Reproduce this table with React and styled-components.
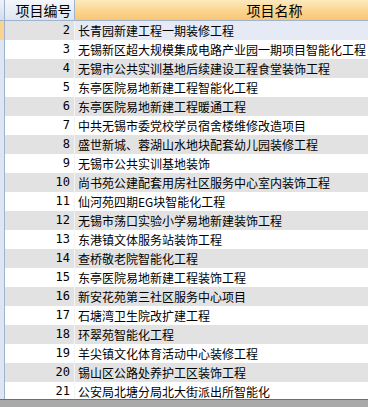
import React from 'react'
import styled, { createGlobalStyle } from 'styled-components'

const GlobalStyle = createGlobalStyle`
  html, body {
    margin: 0;
    padding: 0;
    background: #ffffff;
  }
`

const rows = [
  [2, '长青园新建工程一期装修工程'],
  [3, '无锡新区超大规模集成电路产业园一期项目智能化工程'],
  [4, '无锡市公共实训基地后续建设工程食堂装饰工程'],
  [5, '东亭医院易地新建工程智能化工程'],
  [6, '东亭医院易地新建工程暖通工程'],
  [7, '中共无锡市委党校学员宿舍楼维修改造项目'],
  [8, '盛世新城、蓉湖山水地块配套幼儿园装修工程'],
  [9, '无锡市公共实训基地装饰'],
  [10, '尚书苑公建配套用房社区服务中心室内装饰工程'],
  [11, '仙河苑四期EG块智能化工程'],
  [12, '无锡市荡口实验小学易地新建装饰工程'],
  [13, '东港镇文体服务站装饰工程'],
  [14, '查桥敬老院智能化工程'],
  [15, '东亭医院易地新建工程装饰工程'],
  [16, '新安花苑第三社区服务中心项目'],
  [17, '石塘湾卫生院改扩建工程'],
  [18, '环翠苑智能化工程'],
  [19, '羊尖镇文化体育活动中心装修工程'],
  [20, '锡山区公路处养护工区装饰工程'],
  [21, '公安局北塘分局北大街派出所智能化'],
]

const Grid = styled.div`
  width: 368px;
  height: 407px;
  display: flex;
  flex-direction: column;
  overflow: hidden;
  font-family: "Noto Sans CJK SC", "DejaVu Sans", sans-serif;
  color: #000;
`

const Columns = `
  display: grid;
  grid-template-columns: 5px 70px 400px;
`

const HeaderRow = styled.div`
  ${Columns}
  height: 20px;
  border-bottom: 1px solid #9fb4cc;
  flex: none;
`

const Corner = styled.div`
  background: linear-gradient(#eef3fa, #d3deec);
  border-right: 1px solid #9fb4cc;
`

const HeadCell = styled.div`
  display: flex;
  align-items: center;
  justify-content: center;
  font-size: 14px;
  line-height: 20px;
  padding-left: ${p => p.$pad}px;
  background: ${p => p.$active
    ? 'linear-gradient(#fde9bd, #fbd58e 55%, #f9c574)'
    : 'linear-gradient(#f4f7fb, #dde6f1)'};
  border-right: 1px solid ${p => p.$active ? '#f2c583' : '#9fb4cc'};
`

const Body = styled.div`
  flex: 1;
  overflow: hidden;
`

const Row = styled.div`
  ${Columns}
  height: 19px;
  background: ${p => p.$alt ? '#e2e2e2' : '#ffffff'};
`

const Indicator = styled.div`
  background: ${p => p.$current ? '#fcd390' : '#dde7f4'};
  border-right: 1px solid #9fb4cc;
`

const NumCell = styled.div`
  font-family: "DejaVu Sans Mono", "Liberation Mono", monospace;
  font-size: 12px;
  line-height: 19px;
  text-align: right;
  padding-right: 4px;
  border-right: 1px solid #f4f4f4;
`

const NameCell = styled.div`
  font-size: 12px;
  line-height: 19px;
  padding-left: 3px;
  white-space: nowrap;
  background: ${p => p.$current ? '#e6eaf5' : 'transparent'};
`

const ScrollBar = styled.div`
  height: 7px;
  flex: none;
  border-top: 1px solid #6e6e6e;
  background: #a9a9a9;
`

export default function App() {
  return (
    <>
      <GlobalStyle />
      <Grid>
        <HeaderRow>
          <Corner />
          <HeadCell $pad={8}>项目编号</HeadCell>
          <HeadCell $active $pad={0}>项目名称</HeadCell>
        </HeaderRow>
        <Body>
          {rows.map(([id, name], i) => (
            <Row key={id} $alt={i % 2 === 0}>
              <Indicator $current={i === 0} />
              <NumCell>{id}</NumCell>
              <NameCell $current={i === 0}>{name}</NameCell>
            </Row>
          ))}
        </Body>
        <ScrollBar />
      </Grid>
    </>
  )
}
